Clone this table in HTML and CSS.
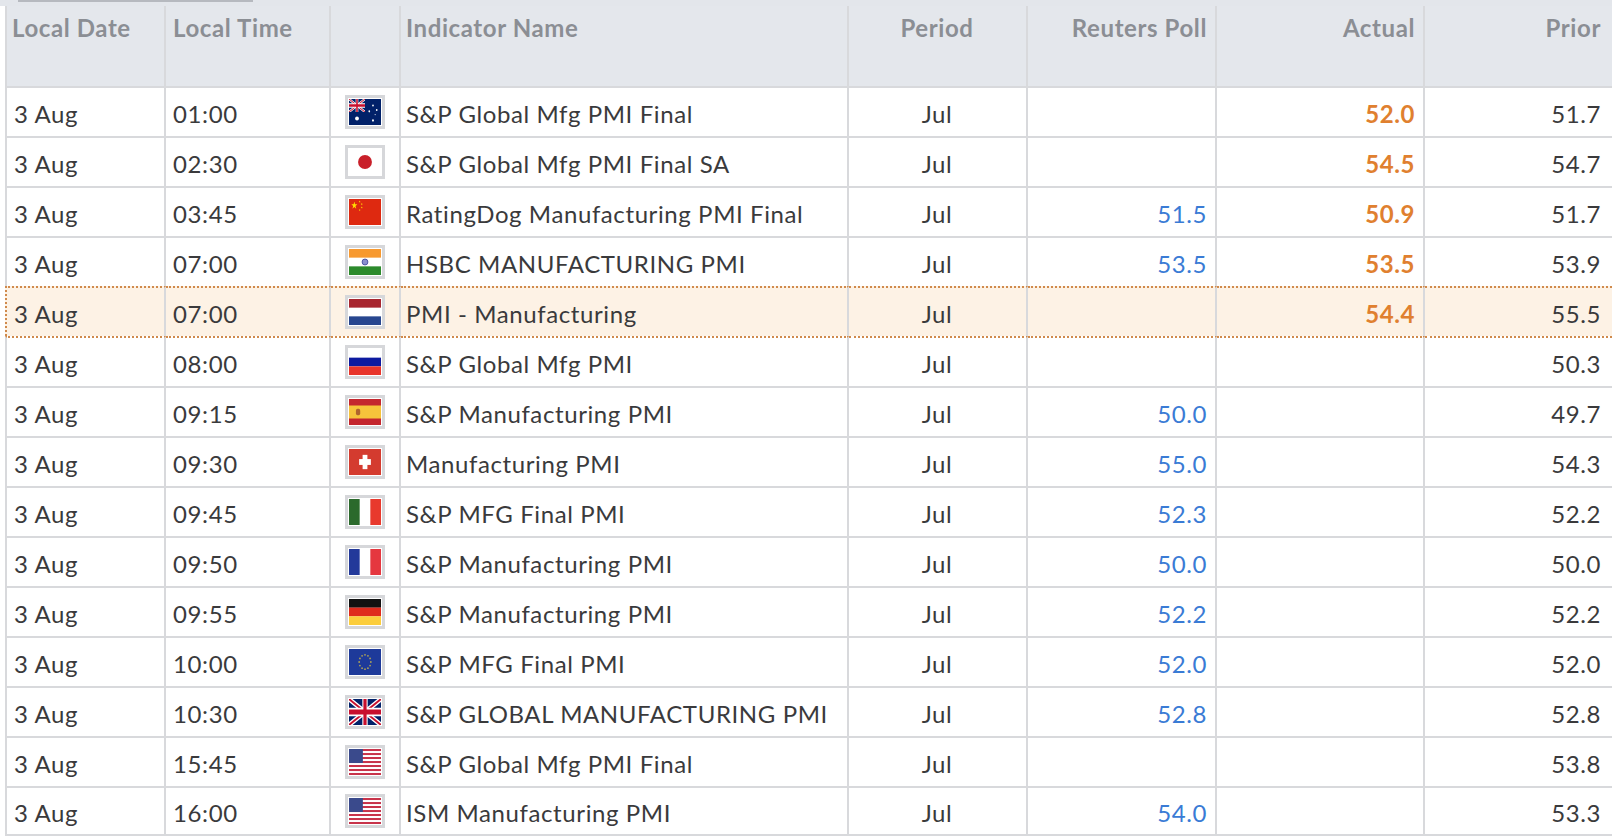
FILE: index.html
```html
<!DOCTYPE html>
<html>
<head>
<meta charset="utf-8">
<link rel="stylesheet" href="styles.css">
</head>
<body>
<svg class="defs" width="0" height="0">
  <defs>
    <symbol id="uj" viewBox="0 0 60 30" preserveAspectRatio="none">
      <rect width="60" height="30" fill="#012169"/>
      <path d="M0,0 L60,30 M60,0 L0,30" stroke="#fff" stroke-width="6"/>
      <path d="M0,0 L60,30 M60,0 L0,30" stroke="#C8102E" stroke-width="2.5"/>
      <path d="M30,0 v30 M0,15 h60" stroke="#fff" stroke-width="10"/>
      <path d="M30,0 v30 M0,15 h60" stroke="#C8102E" stroke-width="6"/>
    </symbol>
    <symbol id="star" viewBox="-1 -1 2 2">
      <polygon points="0,-1 0.2245,-0.309 0.951,-0.309 0.363,0.118 0.588,0.809 0,0.382 -0.588,0.809 -0.363,0.118 -0.951,-0.309 -0.2245,-0.309" fill="#ffde00"/>
    </symbol>
  </defs>
</svg>
<div class="topbar"><div class="thumb"></div></div>
<table class="cal">
  <thead>
    <tr>
      <th class="c-date">Local Date</th>
      <th class="c-time">Local Time</th>
      <th class="c-flag"></th>
      <th class="c-name">Indicator Name</th>
      <th class="c-period">Period</th>
      <th class="c-num c-poll">Reuters Poll</th>
      <th class="c-num c-actual">Actual</th>
      <th class="c-num c-prior">Prior</th>
    </tr>
  </thead>
  <tbody>
    <tr>
      <td class="c-date">3 Aug</td><td class="c-time">01:00</td>
      <td class="c-flag"><span class="flag"><svg viewBox="0 0 60 40" preserveAspectRatio="none"><rect width="60" height="40" fill="#012169"/><use href="#uj" x="0" y="0" width="30" height="20"/><ellipse cx="15" cy="30" rx="3.6" ry="3" fill="#fff"/><circle cx="45" cy="10" r="1.6" fill="#fff"/><circle cx="38" cy="19" r="1.6" fill="#fff"/><circle cx="52" cy="17" r="1.6" fill="#fff"/><circle cx="45" cy="33" r="1.8" fill="#fff"/><circle cx="49" cy="24" r="1" fill="#fff"/></svg></span></td>
      <td class="c-name">S&amp;P Global Mfg PMI Final</td><td class="c-period">Jul</td>
      <td class="c-num"></td><td class="c-num act">52.0</td><td class="c-num c-prior">51.7</td>
    </tr>
    <tr>
      <td class="c-date">3 Aug</td><td class="c-time">02:30</td>
      <td class="c-flag"><span class="flag"><svg viewBox="0 0 60 40" preserveAspectRatio="none"><rect width="60" height="40" fill="#fff"/><ellipse cx="30" cy="20" rx="13" ry="10.8" fill="#c9202a"/></svg></span></td>
      <td class="c-name">S&amp;P Global Mfg PMI Final SA</td><td class="c-period">Jul</td>
      <td class="c-num"></td><td class="c-num act">54.5</td><td class="c-num c-prior">54.7</td>
    </tr>
    <tr>
      <td class="c-date">3 Aug</td><td class="c-time">03:45</td>
      <td class="c-flag"><span class="flag"><svg viewBox="0 0 60 40" preserveAspectRatio="none"><rect width="60" height="40" fill="#de2910"/><use href="#star" x="4" y="4" width="12" height="12"/><use href="#star" x="18" y="2" width="4" height="4"/><use href="#star" x="22" y="6" width="4" height="4"/><use href="#star" x="22" y="11" width="4" height="4"/><use href="#star" x="18" y="15" width="4" height="4"/></svg></span></td>
      <td class="c-name">RatingDog Manufacturing PMI Final</td><td class="c-period">Jul</td>
      <td class="c-num poll">51.5</td><td class="c-num act">50.9</td><td class="c-num c-prior">51.7</td>
    </tr>
    <tr>
      <td class="c-date">3 Aug</td><td class="c-time">07:00</td>
      <td class="c-flag"><span class="flag"><svg viewBox="0 0 60 40" preserveAspectRatio="none"><rect width="60" height="40" fill="#fff"/><rect width="60" height="13.3" fill="#f7992f"/><rect y="26.7" width="60" height="13.3" fill="#2c8a2c"/><ellipse cx="30" cy="20" rx="5.5" ry="4.6" fill="#8a8fcf" stroke="#2a3590" stroke-width="1.2"/></svg></span></td>
      <td class="c-name">HSBC MANUFACTURING PMI</td><td class="c-period">Jul</td>
      <td class="c-num poll">53.5</td><td class="c-num act">53.5</td><td class="c-num c-prior">53.9</td>
    </tr>
    <tr class="hl">
      <td class="c-date">3 Aug</td><td class="c-time">07:00</td>
      <td class="c-flag"><span class="flag"><svg viewBox="0 0 60 40" preserveAspectRatio="none"><rect width="60" height="40" fill="#fff"/><rect width="60" height="13.3" fill="#a8262f"/><rect y="26.7" width="60" height="13.3" fill="#27468f"/></svg></span></td>
      <td class="c-name">PMI - Manufacturing</td><td class="c-period">Jul</td>
      <td class="c-num"></td><td class="c-num act">54.4</td><td class="c-num c-prior">55.5</td>
    </tr>
    <tr class="after-hl">
      <td class="c-date">3 Aug</td><td class="c-time">08:00</td>
      <td class="c-flag"><span class="flag"><svg viewBox="0 0 60 40" preserveAspectRatio="none"><rect width="60" height="40" fill="#fff"/><rect y="13.3" width="60" height="13.3" fill="#0d1aa0"/><rect y="26.7" width="60" height="13.3" fill="#e8352b"/></svg></span></td>
      <td class="c-name">S&amp;P Global Mfg PMI</td><td class="c-period">Jul</td>
      <td class="c-num"></td><td class="c-num"></td><td class="c-num c-prior">50.3</td>
    </tr>
    <tr>
      <td class="c-date">3 Aug</td><td class="c-time">09:15</td>
      <td class="c-flag"><span class="flag"><svg viewBox="0 0 60 40" preserveAspectRatio="none"><rect width="60" height="40" fill="#c4262e"/><rect y="10" width="60" height="20" fill="#f6c43b"/><rect x="13" y="15" width="8" height="10" rx="3" fill="#b0652d"/></svg></span></td>
      <td class="c-name">S&amp;P Manufacturing PMI</td><td class="c-period">Jul</td>
      <td class="c-num poll">50.0</td><td class="c-num"></td><td class="c-num c-prior">49.7</td>
    </tr>
    <tr>
      <td class="c-date">3 Aug</td><td class="c-time">09:30</td>
      <td class="c-flag"><span class="flag"><svg viewBox="0 0 60 40" preserveAspectRatio="none"><rect width="60" height="40" fill="#d43b2f"/><rect x="25.5" y="9" width="9" height="22" fill="#fff"/><rect x="19" y="15.5" width="22" height="9" fill="#fff"/></svg></span></td>
      <td class="c-name">Manufacturing PMI</td><td class="c-period">Jul</td>
      <td class="c-num poll">55.0</td><td class="c-num"></td><td class="c-num c-prior">54.3</td>
    </tr>
    <tr>
      <td class="c-date">3 Aug</td><td class="c-time">09:45</td>
      <td class="c-flag"><span class="flag"><svg viewBox="0 0 60 40" preserveAspectRatio="none"><rect width="60" height="40" fill="#fff"/><rect width="20" height="40" fill="#2b6a2c"/><rect x="40" width="20" height="40" fill="#e8392d"/></svg></span></td>
      <td class="c-name">S&amp;P MFG Final PMI</td><td class="c-period">Jul</td>
      <td class="c-num poll">52.3</td><td class="c-num"></td><td class="c-num c-prior">52.2</td>
    </tr>
    <tr>
      <td class="c-date">3 Aug</td><td class="c-time">09:50</td>
      <td class="c-flag"><span class="flag"><svg viewBox="0 0 60 40" preserveAspectRatio="none"><rect width="60" height="40" fill="#fff"/><rect width="20" height="40" fill="#23399a"/><rect x="40" width="20" height="40" fill="#e5373f"/></svg></span></td>
      <td class="c-name">S&amp;P Manufacturing PMI</td><td class="c-period">Jul</td>
      <td class="c-num poll">50.0</td><td class="c-num"></td><td class="c-num c-prior">50.0</td>
    </tr>
    <tr>
      <td class="c-date">3 Aug</td><td class="c-time">09:55</td>
      <td class="c-flag"><span class="flag"><svg viewBox="0 0 60 40" preserveAspectRatio="none"><rect width="60" height="13.4" fill="#111"/><rect y="13.3" width="60" height="13.4" fill="#df2a1d"/><rect y="26.6" width="60" height="13.4" fill="#fbcd3c"/></svg></span></td>
      <td class="c-name">S&amp;P Manufacturing PMI</td><td class="c-period">Jul</td>
      <td class="c-num poll">52.2</td><td class="c-num"></td><td class="c-num c-prior">52.2</td>
    </tr>
    <tr>
      <td class="c-date">3 Aug</td><td class="c-time">10:00</td>
      <td class="c-flag"><span class="flag"><svg viewBox="0 0 60 40" preserveAspectRatio="none"><rect width="60" height="40" fill="#1e3a9a"/><g fill="#c9b54a"><circle cx="30" cy="9" r="1.4"/><circle cx="35.5" cy="10.5" r="1.4"/><circle cx="39.5" cy="14.5" r="1.4"/><circle cx="41" cy="20" r="1.4"/><circle cx="39.5" cy="25.5" r="1.4"/><circle cx="35.5" cy="29.5" r="1.4"/><circle cx="30" cy="31" r="1.4"/><circle cx="24.5" cy="29.5" r="1.4"/><circle cx="20.5" cy="25.5" r="1.4"/><circle cx="19" cy="20" r="1.4"/><circle cx="20.5" cy="14.5" r="1.4"/><circle cx="24.5" cy="10.5" r="1.4"/></g></svg></span></td>
      <td class="c-name">S&amp;P MFG Final PMI</td><td class="c-period">Jul</td>
      <td class="c-num poll">52.0</td><td class="c-num"></td><td class="c-num c-prior">52.0</td>
    </tr>
    <tr>
      <td class="c-date">3 Aug</td><td class="c-time">10:30</td>
      <td class="c-flag"><span class="flag"><svg viewBox="0 0 60 40" preserveAspectRatio="none"><use href="#uj" x="0" y="0" width="60" height="40"/></svg></span></td>
      <td class="c-name">S&amp;P GLOBAL MANUFACTURING PMI</td><td class="c-period">Jul</td>
      <td class="c-num poll">52.8</td><td class="c-num"></td><td class="c-num c-prior">52.8</td>
    </tr>
    <tr>
      <td class="c-date">3 Aug</td><td class="c-time">15:45</td>
      <td class="c-flag"><span class="flag"><svg viewBox="0 0 60 40" preserveAspectRatio="none"><rect width="60" height="40" fill="#fff"/><g fill="#c8334a"><rect y="0" width="60" height="3.1"/><rect y="6.2" width="60" height="3.1"/><rect y="12.3" width="60" height="3.1"/><rect y="18.5" width="60" height="3.1"/><rect y="24.6" width="60" height="3.1"/><rect y="30.8" width="60" height="3.1"/><rect y="36.9" width="60" height="3.1"/></g><rect width="26" height="21.5" fill="#3a4a8c"/></svg></span></td>
      <td class="c-name">S&amp;P Global Mfg PMI Final</td><td class="c-period">Jul</td>
      <td class="c-num"></td><td class="c-num"></td><td class="c-num c-prior">53.8</td>
    </tr>
    <tr>
      <td class="c-date">3 Aug</td><td class="c-time">16:00</td>
      <td class="c-flag"><span class="flag"><svg viewBox="0 0 60 40" preserveAspectRatio="none"><rect width="60" height="40" fill="#fff"/><g fill="#c8334a"><rect y="0" width="60" height="3.1"/><rect y="6.2" width="60" height="3.1"/><rect y="12.3" width="60" height="3.1"/><rect y="18.5" width="60" height="3.1"/><rect y="24.6" width="60" height="3.1"/><rect y="30.8" width="60" height="3.1"/><rect y="36.9" width="60" height="3.1"/></g><rect width="26" height="21.5" fill="#3a4a8c"/></svg></span></td>
      <td class="c-name">ISM Manufacturing PMI</td><td class="c-period">Jul</td>
      <td class="c-num poll">54.0</td><td class="c-num"></td><td class="c-num c-prior">53.3</td>
    </tr>
  </tbody>
</table>
</body>
</html>
```

FILE: styles.css
```css
html, body {
  margin: 0;
  padding: 0;
  background: #fff;
  font-family: "Lato", "Liberation Sans", sans-serif;
  color: #3a3a3c;
  overflow: hidden;
}
.defs { position: absolute; width: 0; height: 0; }
.topbar {
  height: 6px;
  background: #e3e6eb;
  padding-left: 18px;
}
.thumb {
  width: 235px;
  height: 2px;
  background: #b6b9bf;
}
.cal {
  margin-left: 5px;
  width: 1607px;
  table-layout: fixed;
  border-collapse: separate;
  border-spacing: 0;
  font-size: 24px;
  letter-spacing: 0.6px;
}
.cal th, .cal td {
  box-sizing: border-box;
  border-right: 2px solid #d8d9dc;
  padding: 0 8px 0 7px;
  white-space: nowrap;
  overflow: hidden;
}
.cal th:first-child, .cal td:first-child { border-left: 2px solid #d8d9dc; }
.cal th:first-child { padding-left: 5px; }
.cal th:last-child, .cal td:last-child { border-right: none; padding-right: 11px; }
.cal .c-name { padding-left: 5px; }
.cal th {
  background: #e4e7ec;
  color: #8b8e94;
  font-weight: 700;
  height: 80px;
  vertical-align: top;
  padding-top: 8px;
  line-height: 28px;
  text-align: left;
}
.cal td {
  border-top: 2px solid #d8d9dc;
  height: 50px;
  line-height: 28px;
  padding-top: 4px;
  vertical-align: middle;
}
.cal tbody tr:last-child td { border-bottom: 2px solid #d8d9dc; }
.cal th.c-date { width: 161px; }
.cal th.c-time { width: 165px; }
.cal th.c-flag { width: 70px; }
.cal th.c-name { width: 448px; }
.cal th.c-period { width: 179px; }
.cal th.c-poll { width: 189px; }
.cal th.c-actual { width: 208px; }
.cal th.c-prior { width: 187px; }
.cal .c-period { text-align: center; }
.cal .c-flag { text-align: center; padding: 0; }
.cal .c-num { text-align: right; }
.flag {
  display: inline-block;
  width: 32px;
  height: 26px;
  padding: 1px;
  border: 3px solid #d6d7da;
  background: #fff;
  vertical-align: middle;
  line-height: 0;
}
.flag svg { width: 32px; height: 26px; display: block; }
.poll { color: #3a7bd5; }
.act { color: #e0802f; font-weight: 700; }
.hl td {
  background: #fdf2e5;
  border-top: 2px dotted #d08a4c;
}
.hl td:first-child { border-left: 2px dotted #d08a4c; }
.after-hl td { border-top: 2px dotted #d08a4c; }
```
